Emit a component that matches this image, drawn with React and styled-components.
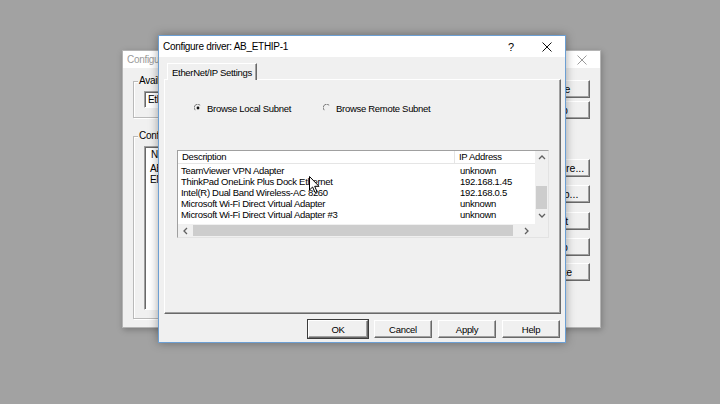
import React from 'react';
import styled, { createGlobalStyle, css } from 'styled-components';

const GlobalStyle = createGlobalStyle`
  html, body {
    margin: 0;
    padding: 0;
    background: #a2a2a2;
  }
  * {
    box-sizing: border-box;
  }
`;

const uiFont = `"Liberation Sans", Arial, sans-serif`;

const Desktop = styled.div`
  position: relative;
  width: 720px;
  height: 404px;
  overflow: hidden;
  background: #a2a2a2;
  font-family: ${uiFont};
  font-size: 9.5px;
  letter-spacing: -0.3px;
  color: #000;
`;

/* ---------- shared window chrome ---------- */

const Window = styled.div`
  position: absolute;
  left: ${p => p.x}px;
  top: ${p => p.y}px;
  width: ${p => p.w}px;
  height: ${p => p.h}px;
  display: flex;
  flex-direction: column;
  background: #f0f0f0;
  border: 1px solid ${p => (p.active ? '#6c9fd3' : '#b4b4b4')};
  box-shadow: ${p => (p.active ? '0 0 9px rgba(0,0,0,0.35)' : '1px 2px 6px rgba(0,0,0,0.25)')};
`;

const TitleBar = styled.div`
  flex: 0 0 ${p => p.h}px;
  display: flex;
  align-items: center;
  background: #fff;
  padding-left: 4px;
`;

const TitleText = styled.div`
  flex: 1;
  font-size: 10px;
  letter-spacing: -0.3px;
  color: ${p => (p.dim ? '#9a9a9a' : '#000')};
  white-space: nowrap;
  overflow: hidden;
`;

const CaptionButton = styled.div`
  width: 36px;
  height: 100%;
  display: flex;
  align-items: center;
  justify-content: center;
  font-size: 11px;
  color: ${p => (p.dim ? '#9a9a9a' : '#000')};
`;

const CloseGlyph = ({ dim }) => (
  <svg width="10" height="10" viewBox="0 0 10 10">
    <path d="M0.5 0.5 L9.5 9.5 M9.5 0.5 L0.5 9.5" stroke={dim ? '#9a9a9a' : '#111'} strokeWidth="1" />
  </svg>
);

/* classic 3D button */
const PushButton = styled.div`
  width: ${p => p.w || 58}px;
  height: 18px;
  display: flex;
  align-items: center;
  justify-content: center;
  background: #f0f0f0;
  border: 1px solid;
  border-color: #fff #696969 #696969 #fff;
  box-shadow: inset -1px -1px 0 #a0a0a0;
  white-space: nowrap;
  overflow: hidden;
  ${p =>
    p.isDefault &&
    css`
      outline: 1px solid #3c3c3c;
      outline-offset: 0;
    `}
`;

/* ---------- background "Configure Drivers" window ---------- */

const BackBody = styled.div`
  flex: 1;
  display: flex;
  padding: 8px 10px 8px 10px;
  gap: 10px;
`;

const LeftCol = styled.div`
  flex: 1;
  display: flex;
  flex-direction: column;
  gap: 13px;
`;

const RightCol = styled.div`
  flex: 0 0 66px;
  display: flex;
  flex-direction: column;
  padding-top: 4px;
`;

const GroupBox = styled.div`
  position: relative;
  border: 1px solid #b9b9b9;
  box-shadow: 1px 1px 0 #fff, inset 1px 1px 0 #fff;
  margin-top: 5px;
  padding: 9px 10px 8px 10px;
  display: flex;
  gap: 8px;
  ${p => p.grow && css`flex: 1;`}
`;

const GroupLabel = styled.span`
  position: absolute;
  top: -7px;
  left: 4px;
  padding: 0 1px;
  background: #f0f0f0;
  font-size: 10px;
`;

const Combo = styled.div`
  width: 200px;
  height: 17px;
  background: #fff;
  border: 1px solid;
  border-color: #a0a0a0 #fff #fff #a0a0a0;
  box-shadow: inset 1px 1px 0 #696969;
  padding-left: 3px;
  display: flex;
  align-items: center;
  font-size: 10px;
`;

const DriverList = styled.div`
  flex: 1;
  background: #fff;
  border: 1px solid;
  border-color: #a0a0a0 #fff #fff #a0a0a0;
  box-shadow: inset 1px 1px 0 #696969;
  padding: 2px 2px;
  font-size: 10px;
  line-height: 11px;
`;

const DriverRow = styled.div`
  padding-left: 3px;
  white-space: nowrap;
  ${p => p.header && css`margin-bottom: 3px; padding-left: 4px;`}
`;

const BackButton = styled(PushButton)`
  width: 66px;
  margin-top: ${p => p.gap || 0}px;
  font-size: 10.5px;
  letter-spacing: 0;
`;

/* ---------- front "Configure driver" dialog ---------- */

const DialogBody = styled.div`
  flex: 1;
  display: flex;
  flex-direction: column;
  padding: 6px 4px 6px 5px;
`;

const TabStrip = styled.div`
  display: flex;
  padding-left: 3px;
  height: 17px;
  position: relative;
  z-index: 1;
`;

const Tab = styled.div`
  height: 17px;
  padding: 0 4px;
  display: flex;
  align-items: center;
  background: #f0f0f0;
  border: 1px solid;
  border-bottom: none;
  border-color: #fff #696969 transparent #fff;
  box-shadow: inset -1px 0 0 #a0a0a0;
`;

const TabPanel = styled.div`
  flex: 0 0 235px;
  margin-top: -1px;
  border: 1px solid;
  border-color: #fff #696969 #696969 #fff;
  box-shadow: inset -1px -1px 0 #a0a0a0;
  display: flex;
  flex-direction: column;
  padding: 21px 0 0 12px;
`;

const RadioRow = styled.div`
  display: flex;
  align-items: center;
  padding-left: 17px;
  gap: 32px;
  height: 14px;
`;

const RadioOption = styled.label`
  display: flex;
  align-items: center;
  gap: 5px;
  white-space: nowrap;
`;

const RadioDot = ({ checked }) => (
  <svg width="8" height="8" viewBox="0 0 8 8">
    <path d="M6.2 1.2 A3.5 3.5 0 0 0 1.2 6.2" fill="none" stroke="#7a7a7a" strokeWidth="1" />
    {checked && <circle cx="4" cy="4" r="1.4" fill="#111" />}
  </svg>
);

const ListView = styled.div`
  margin-top: 35px;
  width: 372px;
  height: 88px;
  border: 1px solid;
  border-color: #a0a0a0 #e3e3e3 #e3e3e3 #a0a0a0;
  background: #fff;
  display: grid;
  grid-template-columns: 1fr 13px;
  grid-template-rows: 1fr 13px;
`;

const ListArea = styled.div`
  overflow: hidden;
`;

const ListHeader = styled.div`
  display: grid;
  grid-template-columns: 277px 1fr;
  height: 13px;
  border-bottom: 1px solid #e5e5e5;
  margin-bottom: 1px;
`;

const HeaderCell = styled.div`
  padding-left: 4px;
  line-height: 12px;
  white-space: nowrap;
  ${p => p.sep && css`border-right: 1px solid #e5e5e5;`}
`;

const ListRow = styled.div`
  display: grid;
  grid-template-columns: 277px 1fr;
  height: 11px;
  line-height: 11px;
`;

const Cell = styled.div`
  padding-left: ${p => (p.ip ? 5 : 3)}px;
  white-space: nowrap;
  overflow: hidden;
`;

const VScroll = styled.div`
  background: #f0f0f0;
  display: flex;
  flex-direction: column;
  align-items: center;
  padding: 3px 0 4px;
`;

const VThumb = styled.div`
  width: 11px;
  height: 23px;
  background: #cdcdcd;
  margin-top: 24px;
  margin-bottom: auto;
`;

const HScroll = styled.div`
  background: #f0f0f0;
  display: flex;
  align-items: center;
  padding: 0 4px 0 4px;
  gap: 3px;
`;

const HThumb = styled.div`
  height: 11px;
  width: 320px;
  background: #cdcdcd;
`;

const Spacer = styled.span`
  flex: 1;
`;

const Corner = styled.div`
  background: #f0f0f0;
`;

const Chevron = ({ dir }) => {
  const paths = {
    up: 'M1 5 L4 2 L7 5',
    down: 'M1 2 L4 5 L7 2',
    left: 'M5 1 L2 4 L5 7',
    right: 'M2 1 L5 4 L2 7',
  };
  return (
    <svg width="8" height="8" viewBox="0 0 8 8">
      <path d={paths[dir]} fill="none" stroke="#606060" strokeWidth="1.3" />
    </svg>
  );
};

const ButtonRow = styled.div`
  display: flex;
  justify-content: flex-end;
  gap: 6px;
  margin-top: 6px;
  padding-right: 1px;
`;

const Cursor = styled.svg`
  position: absolute;
  left: 309px;
  top: 176px;
`;

const adapters = [
  ['TeamViewer VPN Adapter', 'unknown'],
  ['ThinkPad OneLink Plus Dock Ethernet', '192.168.1.45'],
  ['Intel(R) Dual Band Wireless-AC 8260', '192.168.0.5'],
  ['Microsoft Wi-Fi Direct Virtual Adapter', 'unknown'],
  ['Microsoft Wi-Fi Direct Virtual Adapter #3', 'unknown'],
];

const backButtons = [
  ['Close', 0],
  ['Help', 3],
  ['Configure...', 40],
  ['Startup...', 8],
  ['Start', 9],
  ['Stop', 8],
  ['Delete', 7],
];

export default function App() {
  return (
    <>
      <GlobalStyle />
      <Desktop>
        <Window x={122} y={50} w={479} h={278}>
          <TitleBar h={17}>
            <TitleText dim>Configure Drivers</TitleText>
            <CaptionButton dim>
              <CloseGlyph dim />
            </CaptionButton>
          </TitleBar>
          <BackBody>
            <LeftCol>
              <GroupBox>
                <GroupLabel>Available Driver Types:</GroupLabel>
                <Combo>EtherNet/IP Driver</Combo>
                <PushButton w={75}>Add New...</PushButton>
              </GroupBox>
              <GroupBox grow>
                <GroupLabel>Configured Drivers:</GroupLabel>
                <DriverList>
                  <DriverRow header>Name and Description</DriverRow>
                  <DriverRow>AB_ETHIP-1 A-B Ethernet RUNNING</DriverRow>
                  <DriverRow>EN2T-1 A-B Ethernet RUNNING</DriverRow>
                </DriverList>
              </GroupBox>
            </LeftCol>
            <RightCol>
              {backButtons.map(([label, gap]) => (
                <BackButton key={label} gap={gap}>
                  {label}
                </BackButton>
              ))}
            </RightCol>
          </BackBody>
        </Window>

        <Window active x={158} y={35} w={408} h={308}>
          <TitleBar h={21}>
            <TitleText>Configure driver: AB_ETHIP-1</TitleText>
            <CaptionButton>?</CaptionButton>
            <CaptionButton>
              <CloseGlyph />
            </CaptionButton>
          </TitleBar>
          <DialogBody>
            <TabStrip>
              <Tab>EtherNet/IP Settings</Tab>
            </TabStrip>
            <TabPanel>
              <RadioRow>
                <RadioOption>
                  <RadioDot checked />
                  Browse Local Subnet
                </RadioOption>
                <RadioOption>
                  <RadioDot />
                  Browse Remote Subnet
                </RadioOption>
              </RadioRow>
              <ListView>
                <ListArea>
                  <ListHeader>
                    <HeaderCell sep>Description</HeaderCell>
                    <HeaderCell>IP Address</HeaderCell>
                  </ListHeader>
                  {adapters.map(([desc, ip]) => (
                    <ListRow key={desc}>
                      <Cell>{desc}</Cell>
                      <Cell ip>{ip}</Cell>
                    </ListRow>
                  ))}
                </ListArea>
                <VScroll>
                  <Chevron dir="up" />
                  <VThumb />
                  <Chevron dir="down" />
                </VScroll>
                <HScroll>
                  <Chevron dir="left" />
                  <HThumb />
                  <Spacer />
                  <Chevron dir="right" />
                </HScroll>
                <Corner />
              </ListView>
            </TabPanel>
            <ButtonRow>
              <PushButton w={60} isDefault>OK</PushButton>
              <PushButton>Cancel</PushButton>
              <PushButton>Apply</PushButton>
              <PushButton>Help</PushButton>
            </ButtonRow>
          </DialogBody>
        </Window>

        <Cursor width="12" height="18" viewBox="0 0 12 18">
          <path d="M0.5 0.5 L0.5 14 L3.6 11 L6 16.5 L8 15.6 L5.7 10.3 L10 10.3 Z" fill="#fff" stroke="#000" strokeWidth="1" />
        </Cursor>
      </Desktop>
    </>
  );
}
